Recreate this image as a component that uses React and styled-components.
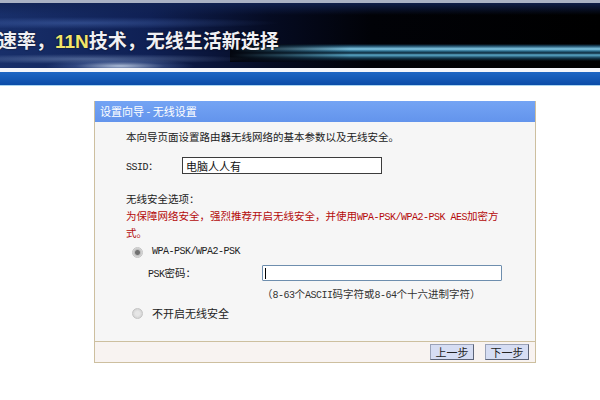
import styled, { createGlobalStyle } from "styled-components";

const GlobalStyle = createGlobalStyle`
  body {
    margin: 0;
    background: #ffffff;
    font-family: "Noto Sans CJK SC", "Liberation Sans", sans-serif;
  }
`;

export default function App() {
  return (
    <>
      <GlobalStyle />
      <Banner>
        <BannerTitle>
          速率，<Yellow>11N</Yellow>技术，无线生活新选择
        </BannerTitle>
      </Banner>
      <WhiteLine />
      <BlueBar />
      <Panel>
        <PanelHeader>设置向导 - 无线设置</PanelHeader>
        <PanelBody>
          <Line>本向导页面设置路由器无线网络的基本参数以及无线安全。</Line>
          <Row $top={12}>
            <Label $width={56}>
              <Latin>SSID</Latin>：
            </Label>
            <TextInput defaultValue="电脑人人有" $width={200} readOnly />
          </Row>
          <Line $top={17}>无线安全选项：</Line>
          <Warning>
            <span>
              为保障网络安全，强烈推荐开启无线安全，并使用
              <Latin>WPA-PSK/WPA2-PSK AES</Latin>加密方
            </span>
            <span>式。</span>
          </Warning>
          <RadioRow $top={3}>
            <Radio $checked />
            <Latin>WPA-PSK/WPA2-PSK</Latin>
          </RadioRow>
          <Row $top={5} $indent={22}>
            <Label $width={114}>
              <Latin>PSK</Latin>密码：
            </Label>
            <PassField>
              <Caret />
            </PassField>
          </Row>
          <Hint>
            （<Latin>8-63</Latin>个<Latin>ASCII</Latin>码字符或
            <Latin>8-64</Latin>个十六进制字符）
          </Hint>
          <RadioRow $top={3}>
            <Radio />
            <Big>不开启无线安全</Big>
          </RadioRow>
        </PanelBody>
        <PanelFooter>
          <StepButton>上一步</StepButton>
          <StepButton>下一步</StepButton>
        </PanelFooter>
      </Panel>
    </>
  );
}

const Banner = styled.div`
  height: 65px;
  border-top: 3px solid #aab2c4;
  overflow: hidden;
  background-color: #000;
  background-image:
    radial-gradient(ellipse 75px 7px at 120px 63px, rgba(210, 225, 245, 0.8), rgba(110, 140, 200, 0.3) 60%, transparent 100%),
    radial-gradient(ellipse 160px 5px at 90px 56px, rgba(150, 175, 215, 0.45), transparent 100%),
    linear-gradient(90deg, #03060f 0px, rgba(3, 6, 15, 0) 120px),
    linear-gradient(180deg, transparent 41px, #1c4a66 43px, #86cce8 46px, #2c6e8e 48px, #0e2a3c 50px, #5aa8c8 52px, #143a50 55px, transparent 58px),
    radial-gradient(ellipse 200px 6px at 80px 20px, rgba(80, 115, 190, 0.45), transparent 100%),
    linear-gradient(180deg, rgba(18, 36, 85, 0.85) 0px, transparent 12px),
    linear-gradient(90deg, #182f6a 0%, #0f2054 25%, #050b22 45%, #010207 62%, #000 100%);
  background-repeat: no-repeat;
  background-size: 100% 100%, 100% 100%, 120px 18px, calc(100% - 230px) 100%, 100% 100%, 100% 100%, 100% 100%;
  background-position: 0 0, 0 0, 230px 41px, 230px 0, 0 0, 0 0, 0 0;
`;

const BannerTitle = styled.div`
  margin-left: -2px;
  padding-top: 26px;
  font-size: 19px;
  line-height: 22px;
  font-weight: bold;
  color: #f0f0f4;
  white-space: nowrap;
  text-shadow: 0 0 2px rgba(0, 0, 0, 0.8);
`;

const Yellow = styled.span`
  color: #f2e56a;
  font-family: "Liberation Sans", sans-serif;
`;

const WhiteLine = styled.div`
  height: 4px;
  background: #f3f5fa;
`;

const BlueBar = styled.div`
  height: 13px;
  background: linear-gradient(180deg, #1d66c4, #0b4ca8);
  border-bottom: 1px solid #a8d4f0;
`;

const Panel = styled.div`
  margin: 15px 0 0 94px;
  width: 440px;
  border: 1px solid #cdbf9f;
  border-top: none;
  font-size: 10.5px;
  color: #222;
`;

const PanelHeader = styled.div`
  height: 21px;
  line-height: 21px;
  padding-left: 5px;
  background: linear-gradient(180deg, #74a4f4, #6394ec);
  color: #ffffff;
  font-size: 11px;
`;

const PanelBody = styled.div`
  background: #f6f6f6;
  padding: 7px 0 20px 31px;
  display: flex;
  flex-direction: column;
`;

const Line = styled.div`
  line-height: 16px;
  margin-top: ${(p) => p.$top || 0}px;
  white-space: nowrap;
`;

const Latin = styled.span`
  font-family: "Liberation Mono", monospace;
  font-size: 10px;
  letter-spacing: -0.5px;
  line-height: 1;
`;

const Row = styled.div`
  display: flex;
  align-items: center;
  margin-top: ${(p) => p.$top || 0}px;
  margin-left: ${(p) => p.$indent || 0}px;
  line-height: 16px;
`;

const Label = styled.span`
  width: ${(p) => p.$width}px;
  flex-shrink: 0;
`;

const TextInput = styled.input`
  box-sizing: border-box;
  width: ${(p) => p.$width}px;
  height: 17px;
  padding: 0 3px;
  border: 1px solid #3c3c3c;
  background: #fff;
  font-family: "Noto Sans CJK SC", sans-serif;
  font-size: 11px;
  color: #111;
  outline: none;
`;

const PassField = styled.div`
  box-sizing: border-box;
  width: 240px;
  height: 16px;
  border: 1px solid #6e8eae;
  border-radius: 1px;
  background: #fff;
  display: flex;
  align-items: center;
  padding-left: 2px;
`;

const Caret = styled.span`
  width: 1px;
  height: 11px;
  background: #000;
`;

const Warning = styled.div`
  color: #b40a0a;
  line-height: 17px;
  display: flex;
  flex-direction: column;
  white-space: nowrap;
`;

const RadioRow = styled.div`
  display: flex;
  align-items: center;
  gap: 9px;
  height: 16px;
  margin-top: ${(p) => p.$top || 0}px;
  margin-left: 6px;
`;

const Radio = styled.span`
  box-sizing: border-box;
  width: 11px;
  height: 11px;
  border-radius: 50%;
  border: 1px solid #c4c4c4;
  background: ${(p) =>
    p.$checked
      ? "radial-gradient(circle, #707070 0 2px, #bdbdbd 3px, #e4e4e4 5px)"
      : "radial-gradient(circle, #e6e6e6 0 2px, #d2d2d2 5px)"};
`;

const Hint = styled.div`
  margin: 5px 0 0 136px;
  line-height: 16px;
  color: #333;
  white-space: nowrap;
`;

const Big = styled.span`
  font-size: 11px;
`;

const PanelFooter = styled.div`
  border-top: 1px solid #cdbf9f;
  background: #f8f3f1;
  height: 20px;
  display: flex;
  justify-content: flex-end;
  align-items: center;
  gap: 11px;
  padding-right: 6px;
`;

const StepButton = styled.button`
  box-sizing: border-box;
  width: 44px;
  height: 16px;
  padding: 0;
  border: 1px solid #5c6478;
  border-top-color: #9aa2b8;
  border-left-color: #9aa2b8;
  background: #d6ddf3;
  font-family: "Noto Sans CJK SC", sans-serif;
  font-size: 11px;
  line-height: 14px;
  color: #222;
`;
